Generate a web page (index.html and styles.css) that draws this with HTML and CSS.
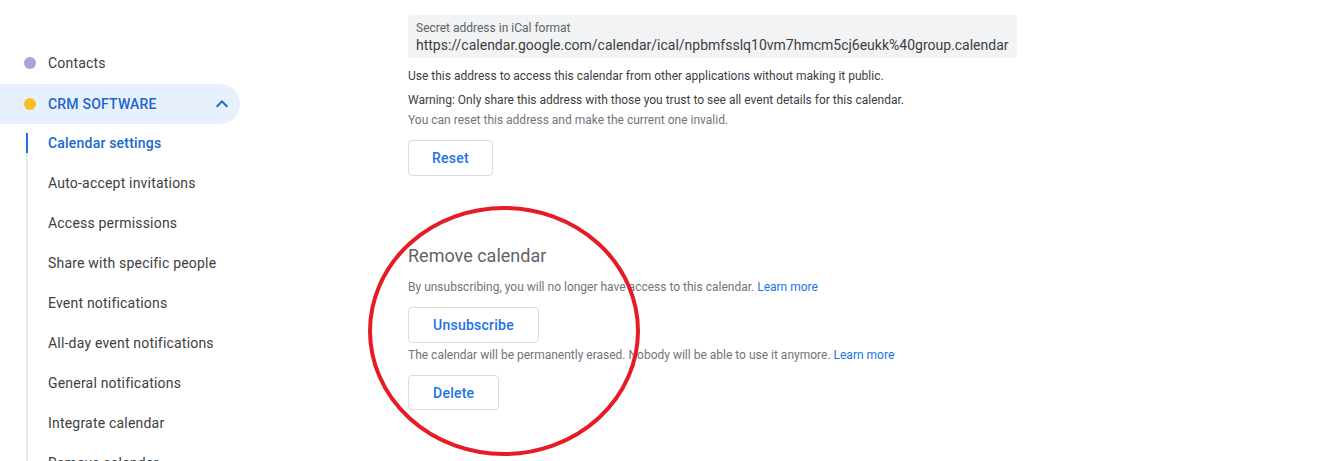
FILE: index.html
```html
<!DOCTYPE html>
<html lang="en">
<head>
    <meta charset="UTF-8">
    <meta name="viewport" content="width=device-width, initial-scale=1.0">
    <title>calendar settings</title>
    <link rel="stylesheet" href="styles.css">
</head>
<body>

    <div class="page">
        <nav class="sidebar">
            <div class="cal-row">
                <span class="dot dot-purple"></span>
                <span class="cal-name">Contacts</span>
            </div>
            <div class="cal-row cal-open">
                <span class="dot dot-yellow"></span>
                <span class="cal-name">CRM SOFTWARE</span>
                <svg class="chevron" viewBox="0 0 24 24" width="24" height="24"><path d="M7.41 15.41L12 10.83l4.59 4.58L18 14l-6-6-6 6z"/></svg>
            </div>
            <ul class="sub-list">
                <li class="active">Calendar settings</li>
                <li>Auto-accept invitations</li>
                <li>Access permissions</li>
                <li>Share with specific people</li>
                <li>Event notifications</li>
                <li>All-day event notifications</li>
                <li>General notifications</li>
                <li>Integrate calendar</li>
                <li>Remove calendar</li>
            </ul>
        </nav>

        <main class="content">
            <div class="address-box">
                <div class="address-label">Secret address in iCal format</div>
                <div class="address-url">https://calendar.google.com/calendar/ical/npbmfsslq10vm7hmcm5cj6eukk%40group.calendar</div>
            </div>
            <p class="note first">Use this address to access this calendar from other applications without making it public.</p>
            <p class="note">Warning: Only share this address with those you trust to see all event details for this calendar.</p>
            <p class="note muted">You can reset this address and make the current one invalid.</p>
            <button class="btn btn-reset">Reset</button>

            <h2 class="section-title">Remove calendar</h2>
            <p class="note muted desc">By unsubscribing, you will no longer have access to this calendar. <a href="#">Learn more</a></p>
            <button class="btn">Unsubscribe</button>
            <p class="note muted desc tight">The calendar will be permanently erased. Nobody will be able to use it anymore. <a href="#">Learn more</a></p>
            <button class="btn btn-last">Delete</button>
        </main>
    </div>

    <svg class="annotation" width="280" height="254" viewBox="0 0 280 254">
        <ellipse cx="138" cy="126" rx="134" ry="123" fill="none" stroke="#e51c24" stroke-width="4"/>
    </svg>

</body>
</html>
```

FILE: styles.css
```css
body {
    margin: 0;
    background: #fff;
    color: #3c4043;
    font-family: Roboto, "Noto Sans", Arial, sans-serif;
    overflow: hidden;
}
.page {
    display: flex;
    gap: 168px;
}
.sidebar {
    width: 240px;
    flex-shrink: 0;
    padding-top: 43px;
    font-size: 14px;
    letter-spacing: 0.2px;
}
.cal-row {
    display: flex;
    align-items: center;
    height: 40px;
    padding-left: 24px;
    padding-right: 6px;
}
.dot {
    width: 12px;
    height: 12px;
    border-radius: 50%;
    margin-right: 12px;
}
.dot-purple { background: #b39ddb; }
.dot-yellow { background: #f6bf26; }
.cal-name { flex: 1; }
.cal-open {
    margin-top: 1px;
    background: #e8f0fe;
    border-radius: 0 20px 20px 0;
    color: #1967d2;
    font-weight: 500;
}
.chevron { fill: #1967d2; }
.sub-list {
    list-style: none;
    margin: 9px 0 0 26px;
    padding: 0;
    border-left: 2px solid #e8eaed;
    display: flex;
    flex-direction: column;
    gap: 20px;
}
.sub-list li {
    line-height: 20px;
    margin-left: -2px;
    padding-left: 20px;
    border-left: 2px solid transparent;
}
.sub-list li.active {
    border-left-color: #1a73e8;
    color: #1967d2;
    font-weight: 500;
}
.content {
    padding-top: 15px;
}
.address-box {
    display: inline-block;
    background: #f1f3f4;
    border-radius: 4px;
    padding: 5px 8px 4px;
}
.address-label {
    font-size: 12px;
    line-height: 16px;
    color: #5f6368;
}
.address-url {
    font-size: 14px;
    line-height: 18px;
    color: #3c4043;
}
.note {
    margin: 0;
    font-size: 12px;
    line-height: 20px;
    color: #3c4043;
}
.note.first { margin-top: 8px; margin-bottom: 4px; }
.note.muted { color: #70757a; }
.note a {
    color: #1a73e8;
    text-decoration: none;
}
.btn {
    display: block;
    height: 36px;
    margin-top: 10px;
    padding: 0 24px;
    background: #fff;
    border: 1px solid #dadce0;
    border-radius: 4px;
    color: #1a73e8;
    font-family: inherit;
    font-size: 14px;
    font-weight: 500;
    letter-spacing: 0.25px;
    cursor: pointer;
}
.btn-reset { padding: 0 23px; }
.btn-last { height: 35px; }
.section-title {
    margin: 68px 0 0;
    font-size: 18px;
    line-height: 24px;
    font-weight: 400;
    color: #5f6368;
}
.desc { margin-top: 9px; }
.desc.tight { margin-top: 2px; }
.annotation {
    position: absolute;
    left: 366px;
    top: 205px;
}
```
